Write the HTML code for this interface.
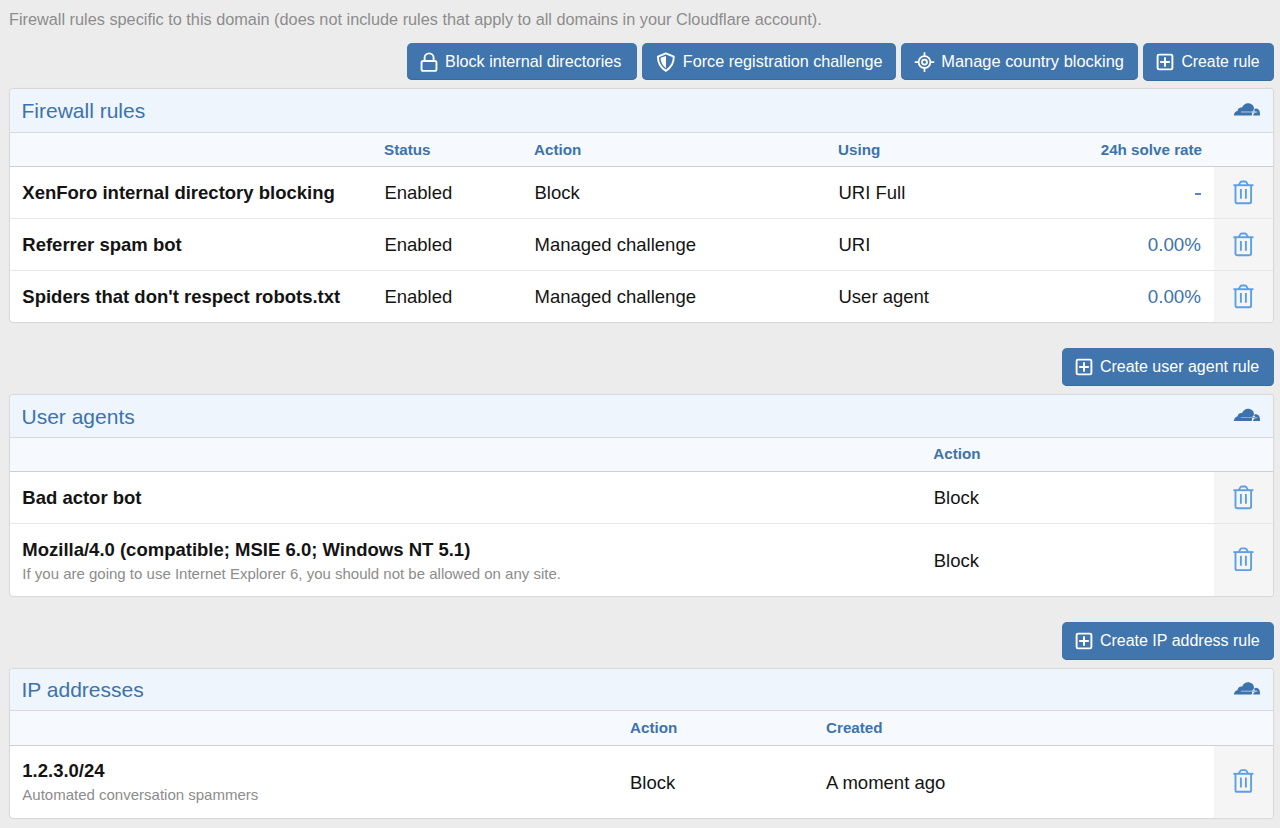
<!DOCTYPE html>
<html><head><meta charset="utf-8"><title>Cloudflare firewall</title>
<style>
html,body{margin:0;padding:0;}
body{width:1280px;height:828px;overflow:hidden;background:#ececec;font-family:"Liberation Sans",sans-serif;position:relative;}
.t{position:absolute;white-space:nowrap;}
.r{position:absolute;box-sizing:content-box;}
svg.r{overflow:visible;}
.btn{background:#4175ad;border-radius:5px;box-shadow:inset 0 -1px 0 #3a6ba0;box-sizing:border-box;}
</style></head><body>
<div class="t" style="left:9.00px;top:10.50px;font-size:16.3px;line-height:16.3px;color:#8c8c8c;font-weight:400;">Firewall rules specific to this domain (does not include rules that apply to all domains in your Cloudflare account).</div>
<div class="r btn" style="left:407px;top:43px;width:230px;height:37px"></div>
<svg class="r" style="left:418px;top:50px" width="22" height="24" viewBox="0 0 22 24"><g fill="none" stroke="#fff" stroke-width="1.9"><rect x="3.55" y="10.95" width="14.9" height="9.9" rx="1.6"/><path d="M6.6 11V7.9a4.5 4.5 0 0 1 9 0V11"/></g></svg>
<div class="t" style="left:445.10px;top:52.69px;font-size:16.2px;line-height:16.2px;color:#fff;font-weight:400;">Block internal directories</div>
<div class="r btn" style="left:642px;top:43px;width:254px;height:37px"></div>
<svg class="r" style="left:655px;top:50px" width="22" height="24" viewBox="0 0 22 24"><path d="M10.85 3.4L18.8 6.6C18.8 13.5 15.5 18.2 10.85 20.8C6.2 18.2 2.9 13.5 2.9 6.6Z" fill="none" stroke="#fff" stroke-width="1.9" stroke-linejoin="round"/><path d="M11 5.9V18.3C7.8 16 5.7 12.5 5.5 7.8Z" fill="#fff"/></svg>
<div class="t" style="left:682.80px;top:52.69px;font-size:16.2px;line-height:16.2px;color:#fff;font-weight:400;">Force registration challenge</div>
<div class="r btn" style="left:901px;top:43px;width:237px;height:37px"></div>
<svg class="r" style="left:914px;top:51px" width="22" height="22" viewBox="0 0 22 22"><g fill="none" stroke="#fff"><circle cx="10.5" cy="11.1" r="5.9" stroke-width="1.8"/><circle cx="10.5" cy="11.1" r="2.5" stroke-width="1.8"/><path d="M10.5 1.3v3.9M10.5 17v3.9M0.8 11.1h3.8M16.4 11.1h3.8" stroke-width="1.7"/></g></svg>
<div class="t" style="left:941.20px;top:53.48px;font-size:16.45px;line-height:16.45px;color:#fff;font-weight:400;">Manage country blocking</div>
<div class="r btn" style="left:1143px;top:43px;width:131px;height:38px"></div>
<svg class="r" style="left:1155.40px;top:52.30px" width="20" height="20" viewBox="0 0 20 20"><g fill="none" stroke="#fff" stroke-width="1.9"><rect x="2.6" y="2.6" width="14.8" height="14.8" rx="1.5"/><path d="M10 5.2v9.6M5.2 10h9.6"/></g></svg>
<div class="t" style="left:1181.40px;top:54.43px;font-size:15.8px;line-height:15.8px;color:#fff;font-weight:400;">Create rule</div>
<div class="r" style="left:9px;top:88px;width:1265px;height:235px;border:1px solid #d9d9d9;border-radius:4px;background:#fff;box-sizing:border-box;box-shadow:0 0 1px rgba(0,0,0,0.08)"></div>
<div class="r" style="left:10px;top:89px;width:1263px;height:43px;background:#eef5fd;border-radius:3px 3px 0 0;border-bottom:1px solid #d9d9d9"></div>
<div class="r" style="left:10px;top:133px;width:1263px;height:33px;background:#f6f9fe;border-bottom:1px solid #cfcfcf"></div>
<div class="t" style="left:21.50px;top:100.22px;font-size:21px;line-height:21px;color:#3c73ad;font-weight:400;">Firewall rules</div>
<svg class="r" style="left:1225px;top:94px" width="40" height="30" viewBox="0 0 1104 828"><g transform="translate(0 12.4)" fill="#3c73ad"><path d="M245 580C245 520 285 465 348 450C352 395 405 345 470 360C505 290 560 240 632 240C730 240 800 305 800 385C800 430 770 462 735 470L440 470L440 500L735 500C752 508 752 580 730 580Z"/><path d="M775 580C778 545 795 515 835 505L890 500L890 470L845 468C815 460 803 440 806 415C822 395 840 388 860 390C925 398 965 450 965 525L965 580Z"/><rect x="440" y="470" width="450" height="30" opacity="0.6"/></g></svg>
<div class="r" style="left:10px;top:218px;width:1263px;height:1px;background:#e8e8e8"></div>
<div class="r" style="left:1214px;top:167px;width:59px;height:51px;background:#f5f5f5"></div>
<svg class="r" style="left:1232px;top:179px" width="24" height="28" viewBox="0 0 24 28"><g transform="translate(0.40 0.90)" fill="none" stroke="#5d9fe4" stroke-width="1.9" stroke-linejoin="round"><path d="M1 5.3h20"/><path d="M6.4 5.3L7.7 2.7Q8.2 1.6 9.4 1.6H12.6Q13.8 1.6 14.3 2.7L15.6 5.3"/><path d="M3.1 5.3v16.4c0 .9.6 1.6 1.5 1.6h12.6c.9 0 1.5-.7 1.5-1.6V5.3"/><path d="M8.5 9v9.9M13.5 9v9.9"/></g></svg>
<div class="r" style="left:10px;top:270px;width:1263px;height:1px;background:#e8e8e8"></div>
<div class="r" style="left:1214px;top:219px;width:59px;height:51px;background:#f5f5f5"></div>
<svg class="r" style="left:1232px;top:231px" width="24" height="28" viewBox="0 0 24 28"><g transform="translate(0.40 0.90)" fill="none" stroke="#5d9fe4" stroke-width="1.9" stroke-linejoin="round"><path d="M1 5.3h20"/><path d="M6.4 5.3L7.7 2.7Q8.2 1.6 9.4 1.6H12.6Q13.8 1.6 14.3 2.7L15.6 5.3"/><path d="M3.1 5.3v16.4c0 .9.6 1.6 1.5 1.6h12.6c.9 0 1.5-.7 1.5-1.6V5.3"/><path d="M8.5 9v9.9M13.5 9v9.9"/></g></svg>
<div class="r" style="left:1214px;top:271px;width:59px;height:51px;background:#f5f5f5;border-radius:0 0 3px 0"></div>
<svg class="r" style="left:1232px;top:283px" width="24" height="28" viewBox="0 0 24 28"><g transform="translate(0.40 0.90)" fill="none" stroke="#5d9fe4" stroke-width="1.9" stroke-linejoin="round"><path d="M1 5.3h20"/><path d="M6.4 5.3L7.7 2.7Q8.2 1.6 9.4 1.6H12.6Q13.8 1.6 14.3 2.7L15.6 5.3"/><path d="M3.1 5.3v16.4c0 .9.6 1.6 1.5 1.6h12.6c.9 0 1.5-.7 1.5-1.6V5.3"/><path d="M8.5 9v9.9M13.5 9v9.9"/></g></svg>
<div class="t" style="left:384.00px;top:141.63px;font-size:15.2px;line-height:15.2px;color:#3c73ad;font-weight:700;">Status</div>
<div class="t" style="left:534.00px;top:141.63px;font-size:15.2px;line-height:15.2px;color:#3c73ad;font-weight:700;">Action</div>
<div class="t" style="left:838.00px;top:141.63px;font-size:15.2px;line-height:15.2px;color:#3c73ad;font-weight:700;">Using</div>
<div class="t" style="right:78.00px;top:141.63px;font-size:15.2px;line-height:15.2px;color:#3c73ad;font-weight:700;">24h solve rate</div>
<div class="t" style="left:22.30px;top:184.14px;font-size:18.5px;line-height:18.5px;color:#141414;font-weight:700;">XenForo internal directory blocking</div>
<div class="t" style="left:384.40px;top:184.14px;font-size:18.5px;line-height:18.5px;color:#141414;font-weight:400;">Enabled</div>
<div class="t" style="left:534.50px;top:184.14px;font-size:18.5px;line-height:18.5px;color:#141414;font-weight:400;">Block</div>
<div class="t" style="left:838.50px;top:184.14px;font-size:18.5px;line-height:18.5px;color:#141414;font-weight:400;">URI Full</div>
<div class="r" style="left:1195px;top:193px;width:6px;height:2px;background:#5a87ba"></div>
<div class="t" style="left:22.30px;top:236.14px;font-size:18.5px;line-height:18.5px;color:#141414;font-weight:700;">Referrer spam bot</div>
<div class="t" style="left:384.40px;top:236.14px;font-size:18.5px;line-height:18.5px;color:#141414;font-weight:400;">Enabled</div>
<div class="t" style="left:534.50px;top:236.14px;font-size:18.5px;line-height:18.5px;color:#141414;font-weight:400;">Managed challenge</div>
<div class="t" style="left:838.50px;top:236.14px;font-size:18.5px;line-height:18.5px;color:#141414;font-weight:400;">URI</div>
<div class="t" style="right:79.00px;top:236.29px;font-size:18.8px;line-height:18.8px;color:#3c73ad;font-weight:400;">0.00%</div>
<div class="t" style="left:22.30px;top:288.14px;font-size:18.5px;line-height:18.5px;color:#141414;font-weight:700;">Spiders that don't respect robots.txt</div>
<div class="t" style="left:384.40px;top:288.14px;font-size:18.5px;line-height:18.5px;color:#141414;font-weight:400;">Enabled</div>
<div class="t" style="left:534.50px;top:288.14px;font-size:18.5px;line-height:18.5px;color:#141414;font-weight:400;">Managed challenge</div>
<div class="t" style="left:838.50px;top:288.14px;font-size:18.5px;line-height:18.5px;color:#141414;font-weight:400;">User agent</div>
<div class="t" style="right:79.00px;top:288.29px;font-size:18.8px;line-height:18.8px;color:#3c73ad;font-weight:400;">0.00%</div>
<div class="r btn" style="left:1062px;top:348px;width:212px;height:38px"></div>
<svg class="r" style="left:1074.20px;top:356.50px" width="20" height="20" viewBox="0 0 20 20"><g fill="none" stroke="#fff" stroke-width="1.9"><rect x="2.6" y="2.6" width="14.8" height="14.8" rx="1.5"/><path d="M10 5.2v9.6M5.2 10h9.6"/></g></svg>
<div class="t" style="left:1099.90px;top:358.66px;font-size:16.0px;line-height:16.0px;color:#fff;font-weight:400;">Create user agent rule</div>
<div class="r" style="left:9px;top:394px;width:1265px;height:203px;border:1px solid #d9d9d9;border-radius:4px;background:#fff;box-sizing:border-box;box-shadow:0 0 1px rgba(0,0,0,0.08)"></div>
<div class="r" style="left:10px;top:395px;width:1263px;height:42px;background:#eef5fd;border-radius:3px 3px 0 0;border-bottom:1px solid #d9d9d9"></div>
<div class="r" style="left:10px;top:438px;width:1263px;height:33px;background:#f6f9fe;border-bottom:1px solid #cfcfcf"></div>
<div class="t" style="left:21.50px;top:405.62px;font-size:21px;line-height:21px;color:#3c73ad;font-weight:400;">User agents</div>
<svg class="r" style="left:1225px;top:400px" width="40" height="30" viewBox="0 0 1104 828"><g transform="translate(0 0.0)" fill="#3c73ad"><path d="M245 580C245 520 285 465 348 450C352 395 405 345 470 360C505 290 560 240 632 240C730 240 800 305 800 385C800 430 770 462 735 470L440 470L440 500L735 500C752 508 752 580 730 580Z"/><path d="M775 580C778 545 795 515 835 505L890 500L890 470L845 468C815 460 803 440 806 415C822 395 840 388 860 390C925 398 965 450 965 525L965 580Z"/><rect x="440" y="470" width="450" height="30" opacity="0.6"/></g></svg>
<div class="t" style="left:933.30px;top:446.23px;font-size:15.2px;line-height:15.2px;color:#3c73ad;font-weight:700;">Action</div>
<div class="r" style="left:10px;top:523px;width:1263px;height:1px;background:#e8e8e8"></div>
<div class="r" style="left:1214px;top:472px;width:59px;height:51px;background:#f5f5f5"></div>
<div class="r" style="left:1214px;top:524px;width:59px;height:72px;background:#f5f5f5;border-radius:0 0 3px 0"></div>
<svg class="r" style="left:1232px;top:484px" width="24" height="28" viewBox="0 0 24 28"><g transform="translate(0.40 0.90)" fill="none" stroke="#5d9fe4" stroke-width="1.9" stroke-linejoin="round"><path d="M1 5.3h20"/><path d="M6.4 5.3L7.7 2.7Q8.2 1.6 9.4 1.6H12.6Q13.8 1.6 14.3 2.7L15.6 5.3"/><path d="M3.1 5.3v16.4c0 .9.6 1.6 1.5 1.6h12.6c.9 0 1.5-.7 1.5-1.6V5.3"/><path d="M8.5 9v9.9M13.5 9v9.9"/></g></svg>
<svg class="r" style="left:1232px;top:546px" width="24" height="28" viewBox="0 0 24 28"><g transform="translate(0.40 0.80)" fill="none" stroke="#5d9fe4" stroke-width="1.9" stroke-linejoin="round"><path d="M1 5.3h20"/><path d="M6.4 5.3L7.7 2.7Q8.2 1.6 9.4 1.6H12.6Q13.8 1.6 14.3 2.7L15.6 5.3"/><path d="M3.1 5.3v16.4c0 .9.6 1.6 1.5 1.6h12.6c.9 0 1.5-.7 1.5-1.6V5.3"/><path d="M8.5 9v9.9M13.5 9v9.9"/></g></svg>
<div class="t" style="left:22.30px;top:489.14px;font-size:18.5px;line-height:18.5px;color:#141414;font-weight:700;">Bad actor bot</div>
<div class="t" style="left:933.70px;top:489.14px;font-size:18.5px;line-height:18.5px;color:#141414;font-weight:400;">Block</div>
<div class="t" style="left:22.30px;top:540.84px;font-size:18.5px;line-height:18.5px;color:#141414;font-weight:700;">Mozilla/4.0 (compatible; MSIE 6.0; Windows NT 5.1)</div>
<div class="t" style="left:22.30px;top:565.70px;font-size:15px;line-height:15px;color:#8c8c8c;font-weight:400;">If you are going to use Internet Explorer 6, you should not be allowed on any site.</div>
<div class="t" style="left:933.70px;top:551.54px;font-size:18.5px;line-height:18.5px;color:#141414;font-weight:400;">Block</div>
<div class="r btn" style="left:1062px;top:622px;width:212px;height:38px"></div>
<svg class="r" style="left:1074.20px;top:630.50px" width="20" height="20" viewBox="0 0 20 20"><g fill="none" stroke="#fff" stroke-width="1.9"><rect x="2.6" y="2.6" width="14.8" height="14.8" rx="1.5"/><path d="M10 5.2v9.6M5.2 10h9.6"/></g></svg>
<div class="t" style="left:1099.90px;top:632.66px;font-size:16.0px;line-height:16.0px;color:#fff;font-weight:400;">Create IP address rule</div>
<div class="r" style="left:9px;top:668px;width:1265px;height:151px;border:1px solid #d9d9d9;border-radius:4px;background:#fff;box-sizing:border-box;box-shadow:0 0 1px rgba(0,0,0,0.08)"></div>
<div class="r" style="left:10px;top:669px;width:1263px;height:41px;background:#eef5fd;border-radius:3px 3px 0 0;border-bottom:1px solid #d9d9d9"></div>
<div class="r" style="left:10px;top:711px;width:1263px;height:34px;background:#f6f9fe;border-bottom:1px solid #cfcfcf"></div>
<div class="t" style="left:21.50px;top:679.02px;font-size:21px;line-height:21px;color:#3c73ad;font-weight:400;">IP addresses</div>
<svg class="r" style="left:1225px;top:673px" width="40" height="30" viewBox="0 0 1104 828"><g transform="translate(0 16.6)" fill="#3c73ad"><path d="M245 580C245 520 285 465 348 450C352 395 405 345 470 360C505 290 560 240 632 240C730 240 800 305 800 385C800 430 770 462 735 470L440 470L440 500L735 500C752 508 752 580 730 580Z"/><path d="M775 580C778 545 795 515 835 505L890 500L890 470L845 468C815 460 803 440 806 415C822 395 840 388 860 390C925 398 965 450 965 525L965 580Z"/><rect x="440" y="470" width="450" height="30" opacity="0.6"/></g></svg>
<div class="t" style="left:630.00px;top:719.73px;font-size:15.2px;line-height:15.2px;color:#3c73ad;font-weight:700;">Action</div>
<div class="t" style="left:826.00px;top:719.73px;font-size:15.2px;line-height:15.2px;color:#3c73ad;font-weight:700;">Created</div>
<div class="r" style="left:1214px;top:746px;width:59px;height:72px;background:#f5f5f5;border-radius:0 0 3px 0"></div>
<svg class="r" style="left:1232px;top:768px" width="24" height="28" viewBox="0 0 24 28"><g transform="translate(0.40 0.50)" fill="none" stroke="#5d9fe4" stroke-width="1.9" stroke-linejoin="round"><path d="M1 5.3h20"/><path d="M6.4 5.3L7.7 2.7Q8.2 1.6 9.4 1.6H12.6Q13.8 1.6 14.3 2.7L15.6 5.3"/><path d="M3.1 5.3v16.4c0 .9.6 1.6 1.5 1.6h12.6c.9 0 1.5-.7 1.5-1.6V5.3"/><path d="M8.5 9v9.9M13.5 9v9.9"/></g></svg>
<div class="t" style="left:22.30px;top:762.04px;font-size:18.5px;line-height:18.5px;color:#141414;font-weight:700;">1.2.3.0/24</div>
<div class="t" style="left:22.30px;top:787.30px;font-size:15px;line-height:15px;color:#8c8c8c;font-weight:400;">Automated conversation spammers</div>
<div class="t" style="left:630.00px;top:774.34px;font-size:18.5px;line-height:18.5px;color:#141414;font-weight:400;">Block</div>
<div class="t" style="left:826.00px;top:774.34px;font-size:18.5px;line-height:18.5px;color:#141414;font-weight:400;">A moment ago</div>
</body></html>
